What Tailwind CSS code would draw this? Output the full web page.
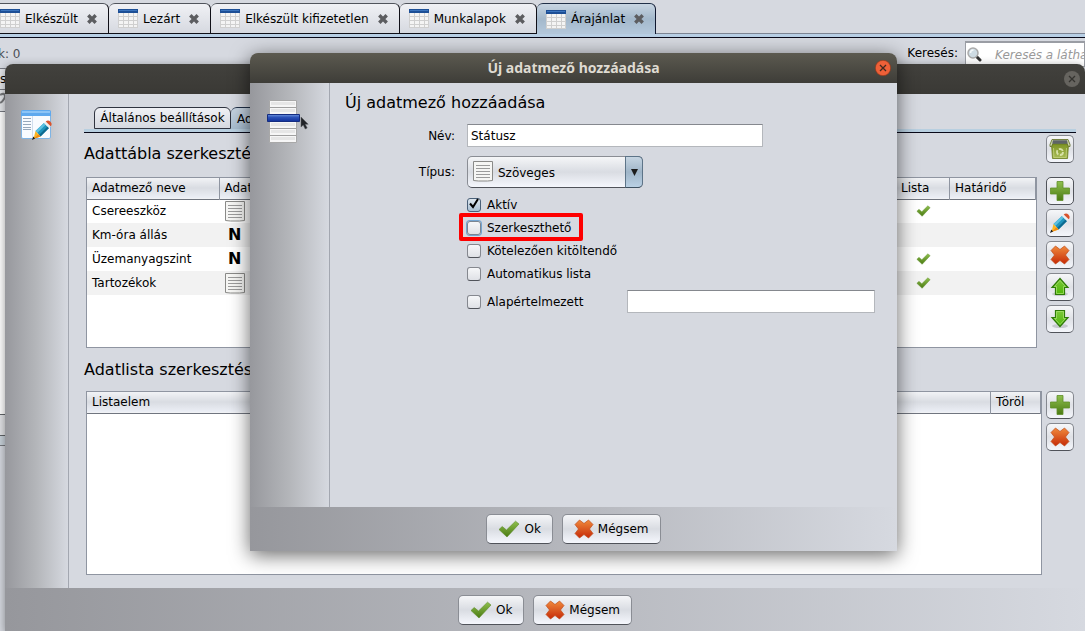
<!DOCTYPE html>
<html lang="hu">
<head>
    <meta charset="UTF-8">
    <meta name="viewport" content="width=device-width, initial-scale=1.0">
    <title>Új adatmező hozzáadása</title>
    <script src="https://cdn.jsdelivr.net/npm/@tailwindcss/browser@4"></script>
</head>
<body class="relative h-screen overflow-hidden bg-[#d6d9e0] font-['DejaVu_Sans',sans-serif] text-xs text-black">

    <!-- shared icons -->
    <svg class="absolute w-0 h-0" aria-hidden="true">
        <defs>
            <linearGradient id="green" x1="0" y1="0" x2="0" y2="1"><stop offset="0" stop-color="#8fc04e"/><stop offset="1" stop-color="#4a7a12"/></linearGradient>
            <linearGradient id="red" x1="0" y1="0" x2="0" y2="1"><stop offset="0" stop-color="#f08a3c"/><stop offset="1" stop-color="#c62a08"/></linearGradient>
            <linearGradient id="blue" x1="0" y1="0" x2="0" y2="1"><stop offset="0" stop-color="#6d93dd"/><stop offset=".4" stop-color="#2b52b8"/><stop offset="1" stop-color="#10309a"/></linearGradient>
            <linearGradient id="lime" x1="0" y1="0" x2="0" y2="1"><stop offset="0" stop-color="#7cc83c"/><stop offset="1" stop-color="#4fb808"/></linearGradient>
            <linearGradient id="bin" x1="0" y1="0" x2="0" y2="1"><stop offset="0" stop-color="#7d9424"/><stop offset="1" stop-color="#a9bc58"/></linearGradient>
        </defs>
        <symbol id="grid" viewBox="0 0 20 19">
            <path fill="#f4f4f4" d="M0 0h20v19H0z"/>
            <path fill="#1d4f96" d="M0 0h20v4H0z"/>
            <path fill="#3b74bd" d="M1 1h18v1H1z"/>
            <path stroke="#cfcfcf" d="M.5 4v15M5.500 4v15M10.500 4v15M15.500 4v15M19.500 4v15M0 7.500h20M0 11.500h20M0 15.500h20M0 18.500h20"/>
        </symbol>
        <symbol id="close" viewBox="0 0 10 10">
            <path stroke="#5c5d60" stroke-width="3.400" d="M1.300 1.300l7.400 7.400M8.700 1.300L1.300 8.700"/>
        </symbol>
        <symbol id="check" viewBox="0 0 22 18">
            <path fill="url(#green)" stroke="#5c8a28" stroke-width=".6" stroke-linejoin="round" d="M1 9.500L4.200 6.500L8.500 10L17.500 1.200L21 4L9 17z"/>
        </symbol>
        <symbol id="cross" viewBox="0 0 20 20">
            <path fill="url(#red)" stroke="#c04a18" stroke-width=".7" stroke-linejoin="round" d="M5.500 1L10 4.500L14.500 1L19 5.500L15.500 10L19 14.500L14.500 19L10 15.500L5.500 19L1 14.500L4.500 10L1 5.500z"/>
        </symbol>
        <symbol id="plus" viewBox="0 0 20 20">
            <path fill="url(#green)" stroke="#5f8f28" stroke-width=".8" d="M7 .5h6V7h6.500v6H13v6.500H7V13H.5V7H7z"/>
        </symbol>
        <symbol id="up" viewBox="0 0 20 20">
            <ellipse cx="10" cy="17" rx="8" ry="2" fill="#c6c9ce"/>
            <path fill="url(#lime)" stroke="#2e7a08" stroke-width="1.200" d="M10 1.500L18 10.500H14.500V17.500H5.500V10.500H2z"/>
            <path fill="none" stroke="#a4e06c" stroke-width=".8" d="M10 3.500L15.500 9.500H13.500V16.500H6.500V9.500H4.500z"/>
        </symbol>
        <symbol id="down" viewBox="0 0 20 20">
            <ellipse cx="10" cy="17" rx="8" ry="2" fill="#c6c9ce"/>
            <path fill="url(#lime)" stroke="#2e7a08" stroke-width="1.200" d="M10 17.500L18 8.500H14.500V1.500H5.500V8.500H2z"/>
            <path fill="none" stroke="#a4e06c" stroke-width=".8" d="M10 15.500L15.500 9.500H13.500V2.500H6.500V9.500H4.500z"/>
        </symbol>
        <symbol id="pencil" viewBox="0 0 20 20">
            <path fill="#1f94bd" d="M3.500 11L12 3l5 5-8.500 8.500z"/>
            <path fill="#5cc0e0" d="M3.500 11L12 3l1.700 1.700-8.500 8.200z"/>
            <path fill="#0d6a90" d="M7 15L15.500 6.400 17 8l-8.500 8.500z"/>
            <path fill="#e9eef0" d="M12 3l1.700-1.600 5 4.900L17 8z"/>
            <path fill="#d9532c" d="M13.700 1.400C15.500 0 17 .2 18.500 1.700S20 4.800 18.700 6.300z"/>
            <path fill="#fbb625" d="M3.500 11l5 5.500L1.500 19z"/>
            <path fill="#f08a12" d="M6.500 14.200l2 2.300L1.500 19z"/>
            <path fill="#1a1a1a" d="M1.300 16.600l1.800 1.800L0 20z"/>
        </symbol>
        <symbol id="trash" viewBox="0 0 22 22">
            <path fill="url(#bin)" stroke="#66781c" stroke-width=".8" d="M2.500 6h17l-1 14.500h-15z"/>
            <path fill="none" stroke="#c3d07e" stroke-width=".8" d="M4.500 10l.4 9.500h12.200l.4-9.500"/>
            <path fill="#cdd5a8" stroke="#5c6c20" stroke-width=".8" stroke-linejoin="round" d="M3 1.500h16l2 5v2h-1.500l-1.500-3H4l-1.500 3H1v-2z"/>
            <path fill="#5e6466" d="M4 2.300h14l.8 3.500H3.200z"/>
            <circle cx="11" cy="14" r="3" fill="none" stroke="#d8e2a8" stroke-width="1.800" stroke-dasharray="4.700 1.600"/>
        </symbol>
        <symbol id="doc" viewBox="0 0 20 21">
            <path fill="#f6f6f4" stroke="#8a8a88" d="M.5.5h19v19l-5 .5h-9l-5-.5z"/>
            <path stroke="#9b9b9b" d="M3 4.500h14M3 7.500h14M3 10.500h14M3 13.500h14M3 16.500h14"/>
        </symbol>
    </svg>

    <!-- main window -->
    <div class="flex flex-col h-full">
        <div class="flex shrink-0 pt-[3px] h-[34px] border-b border-[#7d8594] whitespace-nowrap">
            <div class="flex h-[31px] -ml-[9px]">
                <button class="flex items-center h-[31px] pl-[9px] pr-[11px] rounded-t-md border-t border-r border-b border-t-[#50545c] border-r-[#101018] border-b-[#101018] bg-linear-to-b from-[#f0f1f5] to-[#d6d9e0]">
                    <svg class="w-5 h-[19px] mr-[5px]"><use href="#grid"/></svg>Elkészült<svg class="w-[10px] h-[10px] ml-[9px]"><use href="#close"/></svg>
                </button>
                <button class="flex items-center h-[31px] pl-[9px] pr-[11px] rounded-t-md border-t border-r border-b border-t-[#50545c] border-r-[#101018] border-b-[#101018] bg-linear-to-b from-[#f0f1f5] to-[#d6d9e0]">
                    <svg class="w-5 h-[19px] mr-[5px]"><use href="#grid"/></svg>Lezárt<svg class="w-[10px] h-[10px] ml-[9px]"><use href="#close"/></svg>
                </button>
                <button class="flex items-center h-[31px] pl-[9px] pr-[11px] rounded-t-md border-t border-r border-b border-t-[#50545c] border-r-[#101018] border-b-[#101018] bg-linear-to-b from-[#f0f1f5] to-[#d6d9e0]">
                    <svg class="w-5 h-[19px] mr-[5px]"><use href="#grid"/></svg>Elkészült kifizetetlen<svg class="w-[10px] h-[10px] ml-[9px]"><use href="#close"/></svg>
                </button>
                <button class="flex items-center h-[31px] pl-[9px] pr-[11px] rounded-t-md border-t border-r border-b border-t-[#50545c] border-r-[#101018] border-b-[#101018] bg-linear-to-b from-[#f0f1f5] to-[#d6d9e0]">
                    <svg class="w-5 h-[19px] mr-[5px]"><use href="#grid"/></svg>Munkalapok<svg class="w-[10px] h-[10px] ml-[9px]"><use href="#close"/></svg>
                </button>
                <button class="flex items-center h-[31px] pl-[9px] pr-[11px] rounded-t-md border-t border-r border-t-[#203048] border-r-[#101830] bg-linear-to-b from-[#c8d5e2] via-[#a3b8cb] to-[#b4c8dc]">
                    <svg class="w-5 h-[19px] mr-[5px]"><use href="#grid"/></svg>Árajánlat<svg class="w-[10px] h-[10px] ml-[9px]"><use href="#close"/></svg>
                </button>
            </div>
        </div>
        <div class="h-1 shrink-0 bg-[#b8cfe5] border-b border-[#080818]"></div>
        <div class="flex items-center justify-between h-[30px] shrink-0 overflow-hidden whitespace-nowrap">
            <span class="-ml-[2px] pt-[2px] text-[#4b4f55]">k: 0</span>
            <div class="flex items-center">
                <label for="search" class="mr-[7px]">Keresés:</label>
                <div class="relative w-[120px] h-[26px] mt-[2px]">
                    <input id="search" type="text" placeholder="Keresés a láthatók között" class="w-full h-[26px] pl-[29px] bg-white border border-t-2 border-[#9a9da4] placeholder:text-[#999] placeholder:italic">
                    <svg class="absolute left-[2px] top-[6px] w-[15px] h-[15px]" viewBox="0 0 15 15">
                        <path stroke="#333" stroke-width="3" stroke-linecap="round" d="M9.500 9.500l3.500 3.500"/>
                        <circle cx="6" cy="6" r="5" fill="#cfdce4" stroke="#aaa" stroke-width="1.500"/>
                        <path stroke="#f4f8fa" stroke-width="1.500" fill="none" d="M3.500 6a3 3 0 0 1 3-3"/>
                    </svg>
                </div>
            </div>
        </div>
        <div class="w-10 flex-1">
            <div class="flex items-center h-[22px] border-y border-[#777a82] bg-[#e4e6ea]">s</div>
            <div class="h-[22px] border-b border-[#777a82] bg-[#e4e6ea]">
                <svg class="w-[6px] h-[20px]" viewBox="0 0 6 20"><path fill="none" stroke="#77797c" stroke-width="2" d="M0 5c5-3 6 1 4 4s-3 4-4 3"/></svg>
            </div>
            <div class="h-[302px] bg-white"></div>
            <div class="h-[22px] border-y border-[#606468] bg-[#e2e3e6]"></div>
            <div class="h-[10px] border-b border-[#777a7f] bg-[#c9d2da]"></div>
        </div>
    </div>

    <!-- editor window -->
    <div class="absolute left-[5px] right-0 top-16 rounded-t-lg overflow-hidden bg-[#d6d9e0] shadow-[0_2px_10px_rgba(0,0,0,0.4)]">
        <div class="flex items-center justify-end h-[30px] pr-[5px] bg-linear-to-b from-[#42413d] to-[#3a3935]">
            <button aria-label="Bezárás" class="w-4 h-4">
                <svg class="w-4 h-4" viewBox="0 0 16 16"><circle cx="8" cy="8" r="8" fill="#66645f"/><path stroke="#34332f" stroke-width="1.300" d="M5 5l6 6M11 5l-6 6"/></svg>
            </button>
        </div>
        <div class="flex">
            <aside class="w-16 shrink-0 pl-4 pt-4 border-r border-[#a3a7b0] bg-linear-to-r from-[#97989d] via-[#b4b6ba] to-[#d6d9e0]">
                <svg class="w-8 h-8" viewBox="0 0 32 32">
                    <rect x=".5" y=".5" width="29" height="28" rx="1.500" fill="#f8fbff" stroke="#7fb4e4"/>
                    <path fill="#5fa9ee" d="M0 2q0-2 2-2h26q2 0 2 2v4H0z"/>
                    <path fill="#8cc4f6" d="M1 1h28v2H1z"/>
                    <path stroke="#d0deee" d="M11.500 6v22"/>
                    <path stroke="#97a8bb" d="M2 8.500h8M2 11.500h8M2 14.500h8M2 17.500h8M2 19.500h8"/>
                    <svg x="11" y="10" width="20" height="20" viewBox="0 0 20 20"><use href="#pencil"/></svg>
                </svg>
            </aside>
            <main class="flex-1 pl-[15px] pr-[9px] pt-[13px] pb-[13px]">
                <div class="flex pl-[10px] whitespace-nowrap">
                    <button class="h-[22px] w-[137px] rounded-t-md border border-[#303440] bg-linear-to-b from-[#f0f1f5] to-[#d6d9e0]">Általános beállítások</button>
                    <button class="h-[22px] px-[6px] rounded-t-md border border-l-0 border-b-0 border-[#203048] bg-linear-to-b from-[#c8d5e2] to-[#a8bdd0]">Adatmezők</button>
                </div>
                <div class="h-1 bg-[#b8cfe0] border-b border-[#080818]"></div>
                <div class="flex justify-between h-11 pr-[2px] pt-[2px]">
                    <h2 class="text-base leading-[38px]">Adattábla szerkesztése</h2>
                    <button aria-label="Archívum" class="flex items-center justify-center w-7 h-7 rounded-[5px] border border-[#85888f] border-b-[#50535a] bg-linear-to-b from-[#f6f7f9] via-[#dfe1e6] to-[#f4f6fb]"><svg class="w-[22px] h-[22px]"><use href="#trash"/></svg></button>
                </div>
                <div class="flex gap-[9px] pl-[2px] pr-[2px]">
                    <div class="flex-1 h-[171px] bg-white border border-[#8f95a1]">
                        <table class="w-full table-fixed border-collapse text-left">
                            <thead>
                                <tr class="h-[21px] bg-linear-to-b from-[#f2f3f6] via-[#d9dce2] to-[#eceff6] border-b border-[#70757f]">
                                    <th class="w-[132px] pl-[5px] py-0 font-normal border-r border-[#8f95a1]">Adatmező neve</th>
                                    <th class="pl-[5px] py-0 font-normal border-r border-[#8f95a1]">Adattípus</th>
                                    <th class="w-[53px] pl-[4px] py-0 font-normal border-r border-[#8f95a1]">Lista</th>
                                    <th class="w-[86px] pl-[5px] py-0 font-normal border-r border-[#8f95a1]">Határidő</th>
                                </tr>
                            </thead>
                            <tbody>
                                <tr class="h-6">
                                    <td class="pl-[5px] py-0">Csereeszköz</td>
                                    <td class="pl-[6px] py-0"><svg class="w-5 h-[21px]"><use href="#doc"/></svg></td>
                                    <td class="py-0"><svg class="w-[15px] h-3 mx-auto"><use href="#check"/></svg></td>
                                    <td></td>
                                </tr>
                                <tr class="h-6 bg-[#f2f2f2]">
                                    <td class="pl-[5px] py-0">Km-óra állás</td>
                                    <td class="pl-[9px] py-0 text-base leading-6 font-bold">N</td>
                                    <td></td>
                                    <td></td>
                                </tr>
                                <tr class="h-6">
                                    <td class="pl-[5px] py-0">Üzemanyagszint</td>
                                    <td class="pl-[9px] py-0 text-base leading-6 font-bold">N</td>
                                    <td class="py-0"><svg class="w-[15px] h-3 mx-auto"><use href="#check"/></svg></td>
                                    <td></td>
                                </tr>
                                <tr class="h-6 bg-[#f2f2f2]">
                                    <td class="pl-[5px] py-0">Tartozékok</td>
                                    <td class="pl-[6px] py-0"><svg class="w-5 h-[21px]"><use href="#doc"/></svg></td>
                                    <td class="py-0"><svg class="w-[15px] h-3 mx-auto"><use href="#check"/></svg></td>
                                    <td></td>
                                </tr>
                            </tbody>
                        </table>
                    </div>
                    <div class="flex flex-col gap-1">
                        <button aria-label="Hozzáadás" class="flex items-center justify-center w-7 h-7 rounded-[5px] border border-[#50535a] bg-linear-to-b from-[#f6f7f9] via-[#dfe1e6] to-[#f4f6fb]"><svg class="w-5 h-5"><use href="#plus"/></svg></button>
                        <button aria-label="Szerkesztés" class="flex items-center justify-center w-7 h-7 rounded-[5px] border border-[#85888f] border-b-[#50535a] bg-linear-to-b from-[#f6f7f9] via-[#dfe1e6] to-[#f4f6fb]"><svg class="w-5 h-5"><use href="#pencil"/></svg></button>
                        <button aria-label="Törlés" class="flex items-center justify-center w-7 h-7 rounded-[5px] border border-[#85888f] border-b-[#50535a] bg-linear-to-b from-[#f6f7f9] via-[#dfe1e6] to-[#f4f6fb]"><svg class="w-5 h-5"><use href="#cross"/></svg></button>
                        <button aria-label="Fel" class="flex items-center justify-center w-7 h-7 rounded-[5px] border border-[#85888f] border-b-[#50535a] bg-linear-to-b from-[#f6f7f9] via-[#dfe1e6] to-[#f4f6fb]"><svg class="w-5 h-5"><use href="#up"/></svg></button>
                        <button aria-label="Le" class="flex items-center justify-center w-7 h-7 rounded-[5px] border border-[#85888f] border-b-[#50535a] bg-linear-to-b from-[#f6f7f9] via-[#dfe1e6] to-[#f4f6fb]"><svg class="w-5 h-5"><use href="#down"/></svg></button>
                    </div>
                </div>
                <h2 class="h-[43px] text-base leading-[43px]">Adatlista szerkesztése</h2>
                <div class="flex gap-1 pl-[2px] pr-[2px]">
                    <div class="flex-1 h-[184px] bg-white border border-[#8f95a1]">
                        <table class="w-full table-fixed border-collapse text-left">
                            <thead>
                                <tr class="h-[21px] bg-linear-to-b from-[#f2f3f6] via-[#d9dce2] to-[#eceff6] border-b border-[#70757f]">
                                    <th class="pl-[5px] py-0 font-normal border-r border-[#8f95a1]">Listaelem</th>
                                    <th class="w-[50px] pl-[5px] py-0 font-normal border-r border-[#8f95a1]">Töröl</th>
                                </tr>
                            </thead>
                        </table>
                    </div>
                    <div class="flex flex-col gap-1">
                        <button aria-label="Listaelem hozzáadása" class="flex items-center justify-center w-7 h-7 rounded-[5px] border border-[#85888f] border-b-[#50535a] bg-linear-to-b from-[#f6f7f9] via-[#dfe1e6] to-[#f4f6fb]"><svg class="w-5 h-5"><use href="#plus"/></svg></button>
                        <button aria-label="Listaelem törlése" class="flex items-center justify-center w-7 h-7 rounded-[5px] border border-[#85888f] border-b-[#50535a] bg-linear-to-b from-[#f6f7f9] via-[#dfe1e6] to-[#f4f6fb]"><svg class="w-5 h-5"><use href="#cross"/></svg></button>
                    </div>
                </div>
            </main>
        </div>
        <div class="flex justify-center gap-[9px] h-11 pt-[7px] bg-linear-to-r from-[#96979c] to-[#d6d9e0]">
            <button class="flex items-center gap-1 h-[30px] px-[11px] rounded-[5px] border border-[#8a8d94] border-b-[#50535a] bg-linear-to-b from-[#f5f6f8] via-[#d9dce2] to-[#f5f7fd]"><svg class="w-[22px] h-[18px]"><use href="#check"/></svg>Ok</button>
            <button class="flex items-center gap-1 h-[30px] px-[11px] rounded-[5px] border border-[#8a8d94] border-b-[#50535a] bg-linear-to-b from-[#f5f6f8] via-[#d9dce2] to-[#f5f7fd]"><svg class="w-5 h-5"><use href="#cross"/></svg>Mégsem</button>
        </div>
    </div>

    <!-- new field dialog -->
    <div role="dialog" aria-labelledby="dialog-title" class="absolute left-[250px] right-[188px] top-[53px] rounded-t-lg bg-[#d6d9e0] shadow-[0_4px_20px_rgba(0,0,0,0.6)]">
        <div class="relative flex items-center justify-center h-[30px] rounded-t-lg bg-linear-to-b from-[#5c5a50] to-[#3e3d38]">
            <h1 id="dialog-title" class="font-['Noto_Sans',sans-serif] text-sm font-bold text-[#dfdbd2]">Új adatmező hozzáadása</h1>
            <button aria-label="Bezárás" class="absolute right-[6px] top-[7px] w-4 h-4">
                <svg class="w-4 h-4" viewBox="0 0 16 16"><circle cx="8" cy="8" r="7.700" fill="#ee6038" stroke="#8c3418" stroke-width=".6"/><path stroke="#40291f" stroke-width="1.300" d="M5 5l6 6M11 5l-6 6"/></svg>
            </button>
        </div>
        <div class="flex h-[424px]">
            <aside class="w-20 shrink-0 pl-[17px] pt-[17px] border-r border-[#a3a7b0] bg-linear-to-r from-[#97989d] via-[#b4b6ba] to-[#d6d9e0]">
                <svg class="w-[42px] h-[43px]" viewBox="0 0 42 43">
                    <path fill="#f6f6f6" stroke="#a8a8a8" d="M2.500.5h27v42h-27z"/>
                    <path stroke="#a0a0a0" d="M3 7.500h26M3 21.500h26M3 28.500h26M3 35.500h26"/>
                    <path fill="#e6e6e6" d="M4 2h24v3H4zM4 9h24v3H4zM4 23h24v3H4zM4 30h24v3H4zM4 37h24v3H4z"/>
                    <path fill="url(#blue)" stroke="#142c80" d="M.5 14.500h32v7H.5z"/>
                    <path fill="#222428" stroke="#55585c" stroke-width=".5" d="M34 17v10l2.200-2 2 4 2-1-2-3.800h3z"/>
                </svg>
            </aside>
            <form class="flex-1 pl-[15px]" onsubmit="return false">
                <h2 class="h-[41px] text-base leading-10">Új adatmező hozzáadása</h2>
                <div class="grid grid-cols-[110px_1fr] gap-x-3 gap-y-[9px] items-center">
                    <label for="name" class="text-right">Név:</label>
                    <input id="name" type="text" value="Státusz" class="w-[296px] h-[23px] px-[3px] bg-white border border-[#b4b7bc] border-t-[#85888e]">
                    <label for="type" class="text-right">Típus:</label>
                    <div class="relative w-44 h-8">
                        <select id="type" class="appearance-none w-full h-full pl-[30px] pt-px rounded-[5px] border border-[#8a8d94] border-b-[#50535a] bg-linear-to-b from-[#f5f6f8] via-[#d9dce2] to-[#f5f7fd]">
                            <option>Szöveges</option>
                        </select>
                        <svg class="absolute left-[6px] top-[5px] w-5 h-[21px] pointer-events-none"><use href="#doc"/></svg>
                        <span class="absolute right-0 top-0 flex items-center justify-center w-[18px] h-8 rounded-r-[5px] border border-[#5d7488] border-b-[#3d5060] bg-linear-to-b from-[#c6d5e2] via-[#9fb5c8] to-[#b9d0e4] pointer-events-none">
                            <svg class="w-[7px] h-[7px]" viewBox="0 0 7 7"><path fill="#1c1c1c" d="M0 0h7L3.500 7z"/></svg>
                        </span>
                    </div>
                </div>
                <div class="pl-[122px] pt-[5px]">
                    <label class="relative flex items-center w-fit h-[23px] gap-[6px]">
                        <input type="checkbox" checked class="appearance-none w-[14px] h-[14px] rounded-[3px] border border-[#4a6078] bg-linear-to-b from-[#dde6ee] to-[#a9bfd3]">
                        <svg class="absolute left-[2px] top-[5px] w-[10px] h-[11px] pointer-events-none" viewBox="0 0 10 11"><path fill="none" stroke="#000" stroke-width="2" d="M1 5.500L4 9L9 1"/></svg>
                        Aktív
                    </label>
                    <label class="relative flex items-center w-fit h-[23px] gap-[6px]">
                        <input type="checkbox" class="appearance-none w-[14px] h-[14px] rounded-[3px] border border-[#7c8590] ring-1 ring-[#73a4d1] bg-linear-to-b from-[#f6f7f9] to-[#dfe1e6]">
                        Szerkeszthető
                        <span class="absolute -left-2 -right-3 -top-[3px] -bottom-[2px] rounded-xs border-4 border-[#fe0000] pointer-events-none"></span>
                    </label>
                    <label class="flex items-center w-fit h-[23px] gap-[6px]">
                        <input type="checkbox" class="appearance-none w-[14px] h-[14px] rounded-[3px] border border-[#85888f] border-b-[#50535a] bg-linear-to-b from-[#f6f7f9] to-[#dfe1e6]">
                        Kötelezően kitöltendő
                    </label>
                    <label class="flex items-center w-fit h-[23px] gap-[6px]">
                        <input type="checkbox" class="appearance-none w-[14px] h-[14px] rounded-[3px] border border-[#85888f] border-b-[#50535a] bg-linear-to-b from-[#f6f7f9] to-[#dfe1e6]">
                        Automatikus lista
                    </label>
                    <div class="flex items-center h-[23px] mt-[5px]">
                        <label class="flex items-center w-40 gap-[6px]">
                            <input type="checkbox" class="appearance-none w-[14px] h-[14px] rounded-[3px] border border-[#85888f] border-b-[#50535a] bg-linear-to-b from-[#f6f7f9] to-[#dfe1e6]">
                            Alapértelmezett
                        </label>
                        <input type="text" aria-label="Alapértelmezett érték" class="w-[248px] h-[23px] px-[3px] bg-white border border-[#b4b7bc] border-t-[#85888e]">
                    </div>
                </div>
            </form>
        </div>
        <div class="flex justify-center gap-[9px] h-11 pt-[7px] bg-linear-to-r from-[#96979c] to-[#d6d9e0]">
            <button class="flex items-center gap-1 h-[30px] px-[11px] rounded-[5px] border border-[#8a8d94] border-b-[#50535a] bg-linear-to-b from-[#f5f6f8] via-[#d9dce2] to-[#f5f7fd]"><svg class="w-[22px] h-[18px]"><use href="#check"/></svg>Ok</button>
            <button class="flex items-center gap-1 h-[30px] px-[11px] rounded-[5px] border border-[#8a8d94] border-b-[#50535a] bg-linear-to-b from-[#f5f6f8] via-[#d9dce2] to-[#f5f7fd]"><svg class="w-5 h-5"><use href="#cross"/></svg>Mégsem</button>
        </div>
    </div>
</body>
</html>
